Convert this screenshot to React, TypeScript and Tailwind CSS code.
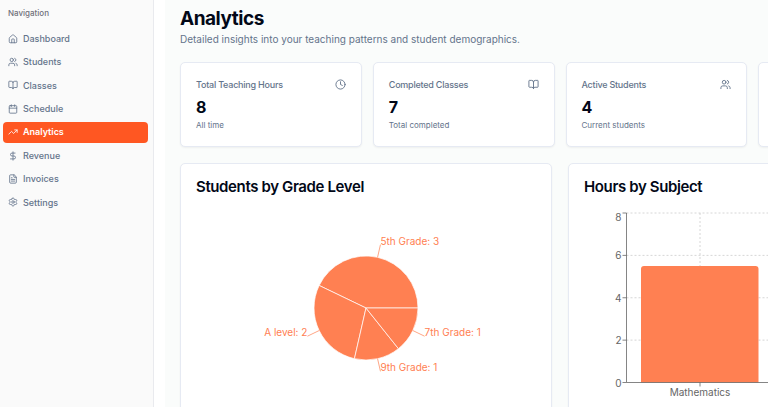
import React from 'react';
import {
    BookOpen,
    Calendar,
    Clock,
    DollarSign,
    FileText,
    House,
    Settings,
    TrendingUp,
    Users,
} from 'lucide-react';

const NAV_ITEMS = [
    { label: 'Dashboard', icon: House },
    { label: 'Students', icon: Users },
    { label: 'Classes', icon: BookOpen },
    { label: 'Schedule', icon: Calendar },
    { label: 'Analytics', icon: TrendingUp, active: true },
    { label: 'Revenue', icon: DollarSign },
    { label: 'Invoices', icon: FileText },
    { label: 'Settings', icon: Settings },
];

const STATS = [
    { title: 'Total Teaching Hours', value: '8', note: 'All time', icon: Clock },
    { title: 'Completed Classes', value: '7', note: 'Total completed', icon: BookOpen },
    { title: 'Active Students', value: '4', note: 'Current students', icon: Users },
];

const GRADES = [
    { name: '5th Grade', count: 3 },
    { name: 'A level', count: 2 },
    { name: '9th Grade', count: 1 },
    { name: '7th Grade', count: 1 },
];

const SUBJECTS = [{ name: 'Mathematics', hours: 5.5 }];

function Sidebar() {
    return (
        <aside className="w-[154px] shrink-0 border-r border-[#e9eaee] bg-[#fafafa] px-[3px] pt-[7px]">
            <h2 className="px-[5px] text-[8px] leading-[12px] font-medium text-[#71717a]">Navigation</h2>
            <nav className="mt-[9px] mr-[2px] flex h-[185px] flex-col justify-between">
                {NAV_ITEMS.map(({ label, icon: Icon, active }) => (
                    <a
                        key={label}
                        href="#"
                        aria-current={active ? 'page' : undefined}
                        className={`flex h-[21px] items-center gap-[5px] rounded-[4px] px-[5px] text-[9px] ${
                            active ? 'bg-[#ff5722] font-semibold text-white' : 'font-medium text-[#64748b]'
                        }`}
                    >
                        <Icon className="size-[10px]" strokeWidth={2} />
                        {label}
                    </a>
                ))}
            </nav>
        </aside>
    );
}

function StatCard({ title, value, note, icon: Icon }: (typeof STATS)[number]) {
    return (
        <div className="h-[85px] rounded-[5px] border border-[#e6eaf3] bg-white px-[15px] pt-[15px] shadow-xs">
            <div className="flex items-center justify-between">
                <h3 className="text-[9px] leading-[13px] font-medium tracking-tight text-[#64748b]">{title}</h3>
                <Icon className="size-[11px] text-[#64748b]" />
            </div>
            <p className="mt-[6px] text-[16px] leading-[21px] font-bold text-[#020817]">{value}</p>
            <p className="mt-[2px] text-[8px] leading-[11px] text-[#64748b]">{note}</p>
        </div>
    );
}

function GradePie() {
    const cx = 170;
    const cy = 100;
    const radius = 52;
    const total = GRADES.reduce((sum, g) => sum + g.count, 0);

    // angles run counter-clockwise from 3 o'clock
    const point = (angle: number, r: number) => ({
        x: cx + r * Math.cos(angle),
        y: cy - r * Math.sin(angle),
    });

    let angle = 0;
    const slices = GRADES.map((g) => {
        const start = angle;
        angle += (g.count / total) * Math.PI * 2;
        const mid = (start + angle) / 2;
        return { ...g, a: point(start, radius), b: point(angle, radius), from: point(mid, radius), to: point(mid, radius + 13) };
    });

    return (
        <svg viewBox="0 0 340 200" className="h-[200px] w-full text-[10px]">
            {slices.map((s) => (
                <g key={s.name}>
                    <path
                        d={`M${cx},${cy} L${s.a.x},${s.a.y} A${radius},${radius} 0 0 0 ${s.b.x},${s.b.y} Z`}
                        fill="#ff8052"
                        stroke="#fff"
                        strokeWidth={0.7}
                    />
                    <path d={`M${s.from.x},${s.from.y} L${s.to.x},${s.to.y}`} stroke="#ff8052" strokeWidth={0.7} />
                    <text x={s.to.x} y={s.to.y} textAnchor={s.to.x < cx ? 'end' : 'start'} fill="#ff8052">
                        {`${s.name}: ${s.count}`}
                    </text>
                </g>
            ))}
        </svg>
    );
}

function SubjectBars() {
    const left = 42.5;
    const right = 340;
    const top = 5;
    const bottom = 174.5;
    const band = 147;
    const y = (v: number) => bottom - (v / 8) * (bottom - top);

    return (
        <svg viewBox="0 0 340 200" className="h-[200px] w-full text-[10px]">
            <g stroke="#ccc" strokeWidth={0.8} strokeDasharray="2 2">
                {[2, 4, 6, 8].map((v) => (
                    <line key={v} x1={left} x2={right} y1={y(v)} y2={y(v)} />
                ))}
                <line x1={left + band / 2} x2={left + band / 2} y1={top} y2={bottom} />
            </g>
            {SUBJECTS.map((s, i) => {
                const x = left + i * band + 14.5;
                const h = bottom - y(s.hours);
                return (
                    <path
                        key={s.name}
                        d={`M${x},${bottom} v${3 - h} q0,-3 3,-3 h111.5 q3,0 3,3 v${h - 3} Z`}
                        fill="#ff8052"
                    />
                );
            })}
            <g stroke="#666" strokeWidth={0.8}>
                <line x1={left} x2={left} y1={top} y2={bottom} />
                <line x1={left} x2={right} y1={bottom} y2={bottom} />
                <line x1={left + band / 2} x2={left + band / 2} y1={bottom} y2={bottom + 4} />
                {[0, 2, 4, 6, 8].map((v) => (
                    <line key={v} x1={left - 4} x2={left} y1={y(v)} y2={y(v)} />
                ))}
            </g>
            <g fill="#666">
                {[0, 2, 4, 6, 8].map((v) => (
                    <text key={v} x={left - 5} y={v === 8 ? y(v) + 8 : y(v) + 4} textAnchor="end">
                        {v}
                    </text>
                ))}
                {SUBJECTS.map((s, i) => (
                    <text key={s.name} x={left + band * (i + 0.5)} y={bottom + 13} textAnchor="middle">
                        {s.name}
                    </text>
                ))}
            </g>
        </svg>
    );
}

function ChartCard({ title, children }: { title: string; children: React.ReactNode }) {
    return (
        <section className="rounded-[5px] border border-[#e6eaf3] bg-white px-[15px] pt-[15px] pb-4 shadow-xs">
            <h2 className="mb-[13px] text-[15px] leading-[16px] font-semibold tracking-tight text-[#020817]">{title}</h2>
            {children}
        </section>
    );
}

export default function App() {
    return (
        <div className="flex h-screen overflow-hidden bg-white font-['Inter',sans-serif]">
            <Sidebar />
            <main className="ml-[11px] min-w-0 flex-1 overflow-hidden bg-[#fafcfb] px-[15px] pt-[7px]">
                <div className="min-w-[760px]">
                    <h1 className="text-[19px] leading-[24px] font-bold tracking-tight text-[#020817]">Analytics</h1>
                    <p className="text-[10px] leading-[16px] text-[#64748b]">
                        Detailed insights into your teaching patterns and student demographics.
                    </p>
                    <div className="mt-[15px] grid grid-cols-4 gap-[11px]">
                        {STATS.map((stat) => (
                            <StatCard key={stat.title} {...stat} />
                        ))}
                        <div className="rounded-[5px] border border-[#e6eaf3] bg-white shadow-xs" />
                    </div>
                    <div className="mt-4 grid grid-cols-2 gap-4">
                        <ChartCard title="Students by Grade Level">
                            <GradePie />
                        </ChartCard>
                        <ChartCard title="Hours by Subject">
                            <SubjectBars />
                        </ChartCard>
                    </div>
                </div>
            </main>
        </div>
    );
}
